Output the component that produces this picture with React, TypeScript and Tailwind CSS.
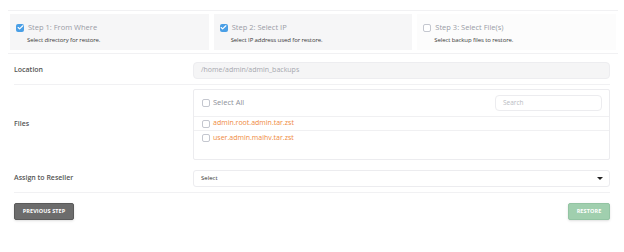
import { Check } from "lucide-react"

const steps = [
  { title: "Step 1: From Where", desc: "Select directory for restore.", done: true },
  { title: "Step 2: Select IP", desc: "Select IP address used for restore.", done: true },
  { title: "Step 3: Select File(s)", desc: "Select backup files to restore.", done: false },
]

const files = ["admin.root.admin.tar.zst", "user.admin.maihv.tar.zst"]

function Box({ checked = false }: { checked?: boolean }) {
  if (checked) {
    return (
      <span className="flex h-[8px] w-[8px] shrink-0 items-center justify-center rounded-[2px] bg-[#4a9fe6]">
        <Check className="h-[7px] w-[7px] text-white" strokeWidth={4} />
      </span>
    )
  }
  return <span className="h-[8px] w-[8px] shrink-0 rounded-[2px] border border-[#c4c7cf] bg-white" />
}

export default function App() {
  return (
    <div className="h-[252px] w-[624px] bg-white pt-[10px] font-['Open_Sans',sans-serif]">
      <div className="mx-[8px] grid grid-cols-3 gap-[5px] border-y border-[#f1f1f3] px-[2px] py-[3px] w-[610px]">
        {steps.map((s, i) => (
          <div key={s.title} className={`h-[36px] px-[6px] pt-[9px] ${i < 2 ? "bg-[#f6f6f7]" : "bg-[#fcfcfc]"}`}>
            <div className="flex items-center gap-[4px]">
              <Box checked={s.done} />
              <span className="text-[7.5px] leading-[9px] text-[#9a9ca6]">{s.title}</span>
            </div>
            <div className="mt-[4px] pl-[11px] text-[6px] leading-[8px] text-[#3a3a3a] tracking-[-0.1px]">{s.desc}</div>
          </div>
        ))}
      </div>

      <div className="mx-[14px] mt-[8px] w-[596px]">
        <div className="flex items-center border-b border-[#f1f1f3] pb-[5px]">
          <div className="w-[179px] text-[7px] font-semibold text-[#555]">Location</div>
          <div className="flex h-[17px] flex-1 items-center rounded-[4px] border border-[#ededf0] bg-[#f5f5f6] px-[7px] text-[7px] text-[#a5a7ae]">
            /home/admin/admin_backups
          </div>
        </div>

        <div className="flex items-center pt-[4px]">
          <div className="w-[179px] text-[7px] font-semibold text-[#555]">Files</div>
          <div className="h-[71px] flex-1 rounded-[2px] border border-[#ececef] bg-white">
            <div className="flex h-[27px] items-center justify-between border-b border-[#f0f0f2] pl-[8px] pr-[7px]">
              <div className="flex items-center gap-[3px]">
                <Box />
                <span className="text-[7.5px] text-[#8d9099]">Select All</span>
              </div>
              <div className="flex h-[16px] w-[107px] items-center rounded-[4px] border border-[#ececef] px-[7px] text-[6.5px] text-[#b9bbc2]">
                Search
              </div>
            </div>
            {files.map((f, i) => (
              <div key={f} className={`flex h-[14px] items-center gap-[3px] pl-[8px] ${i === 0 ? "border-b border-[#f0f0f2]" : ""}`}>
                <Box />
                <span className="text-[7px] text-[#ef8a3d]">{f}</span>
              </div>
            ))}
          </div>
        </div>

        <div className="mt-[10px] flex items-center border-b border-[#f1f1f3] pb-[5px]">
          <div className="w-[179px] text-[7px] font-semibold text-[#555]">Assign to Reseller</div>
          <div className="flex h-[17px] flex-1 items-center justify-between rounded-[3px] border border-[#ececef] bg-white pl-[7px] pr-[6px] text-[6px] text-[#333]">
            <span>Select</span>
            <span className="h-0 w-0 border-x-[3px] border-t-[3px] border-x-transparent border-t-[#222]" />
          </div>
        </div>

        <div className="mt-[10px] flex items-center justify-between">
          <button className="h-[17px] w-[60px] rounded-[2px] border border-[#5a5a5a] bg-[#6c6c6c] text-[5.5px] font-bold tracking-[0.1px] text-white shadow-sm">
            PREVIOUS STEP
          </button>
          <button className="h-[17px] w-[42px] rounded-[2px] border border-[#93c4a3] bg-[#a0cfae] text-[5.5px] font-bold tracking-[0.1px] text-white shadow-sm">
            RESTORE
          </button>
        </div>
      </div>
    </div>
  )
}
